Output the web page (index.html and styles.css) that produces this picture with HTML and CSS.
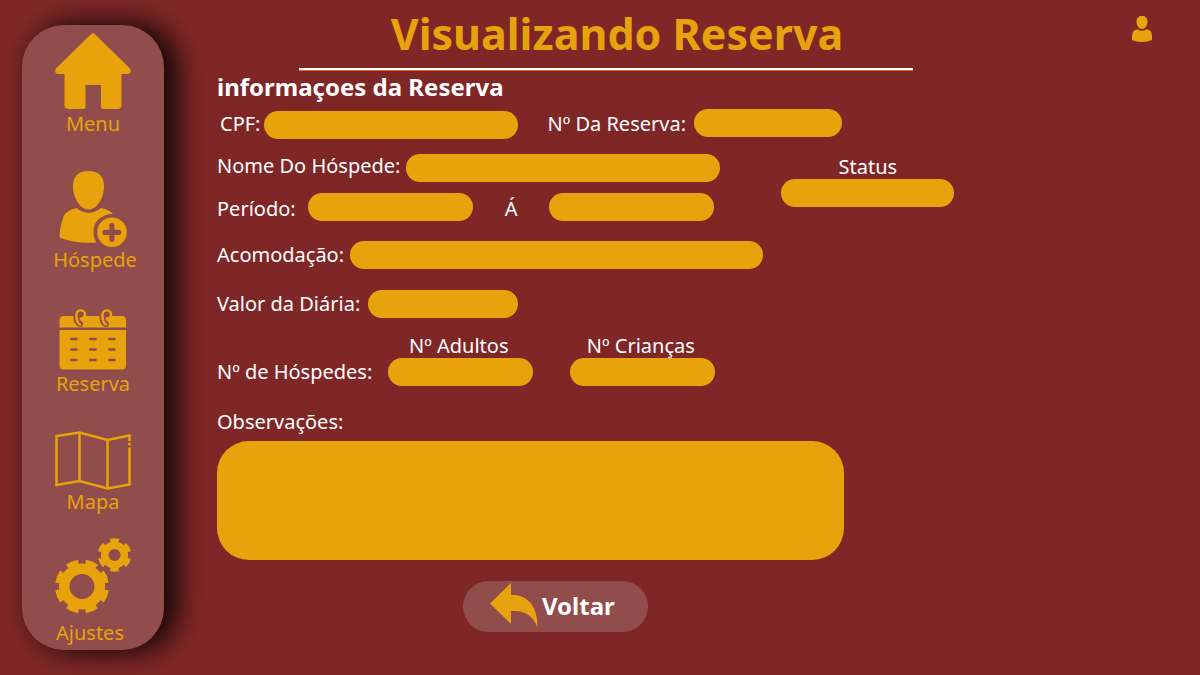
FILE: index.html
```html
<!DOCTYPE html>
<html lang="pt-BR">
<head>
<meta charset="utf-8">
<meta name="viewport" content="width=device-width, initial-scale=1">
<title>Visualizando Reserva</title>
<link rel="stylesheet" href="styles.css">
</head>
<body>
<div class="app">
  <nav class="sidebar" aria-label="Principal">
    <a class="nav-item" href="#menu">
      <svg class="icon" width="76" height="79" viewBox="0 0 76 79" aria-hidden="true">
        <path d="M36 1.200Q38 -.8 40 1.200L75 35.500Q77 41 72.500 41H66.500V72Q66.500 76 62.500 76H48Q46 76 46 74V52H30.500V74Q30.500 76 28.500 76H14Q9.500 76 9.500 72V41H3.500Q-1 41 .8 35.500Z"/>
      </svg>
      <span>Menu</span>
    </a>
    <a class="nav-item nav-guest" href="#hospede">
      <svg class="icon" width="68" height="77" viewBox="0 0 68 77" aria-hidden="true">
        <path d="M29.500 0C39 0 45 5 45 15C45 27 38 38.500 29.500 38.500S14 27 14 15C14 5 20 0 29.500 0Z"/>
        <path d="M17.500 37Q29.500 46.500 42 37Q50 38.500 54 42.800C42 43.500 34 51 34.500 61Q34.500 67 37.500 71.500Q17 73 1.500 67Q.5 66.500 .5 64Q1 55 4.500 45.500Q7 39.500 17.500 37Z"/>
        <path fill-rule="evenodd" d="M53 46.500a14.800 14.800 0 1 1 0 29.600a14.800 14.800 0 1 1 0-29.600ZM50.300 54.500V58.800H46a2.500 2.500 0 0 0 0 5.200H50.300V68.300a2.600 2.600 0 0 0 5.200 0V64H59.800a2.500 2.500 0 0 0 0-5.200H55.500V54.500a2.600 2.600 0 0 0-5.200 0Z"/>
      </svg>
      <span>Hóspede</span>
    </a>
    <a class="nav-item" href="#reserva">
      <svg class="icon" width="68" height="63" viewBox="0 0 68 63" aria-hidden="true">
        <path d="M5 7H63Q67 7 67 11V18.500H.5V11Q.5 7 5 7Z"/>
        <path d="M.5 21H67V56Q67 60.500 62.500 60.500H5Q.5 60.500 .5 56Z"/>
        <g class="cut" stroke-width="6"><path d="M17.500 6V9Q17.500 13.500 21 15M43.500 6V9Q43.500 13.500 47 15"/></g>
        <g class="cut" stroke-width="2.500"><path d="M12.300 30H17.500M31.300 30H36.500M50.300 30H55.500M12.300 40.500H17.500M31.300 40.500H36.500M50.300 40.500H55.500M12.300 51H17.500M31.300 51H36.500M50.300 51H55.500"/></g>
        <g class="line" stroke-width="2.500" stroke-linecap="round"><path d="M21 15.500C17 13.500 17.500 9 17.500 5.500C17.500 0 26 0 26 5.500C26 7 26 8 24.500 8M47 15.500C43 13.500 43.500 9 43.500 5.500C43.500 0 52 0 52 5.500C52 7 52 8 50.500 8"/></g>
        <g class="hole"><ellipse cx="21.700" cy="5.500" rx="2.500" ry="3"/><ellipse cx="47.700" cy="5.500" rx="2.500" ry="3"/></g>
      </svg>
      <span>Reserva</span>
    </a>
    <a class="nav-item nav-map" href="#mapa">
      <svg class="icon" width="76" height="59" viewBox="0 0 76 59" aria-hidden="true">
        <g class="line" stroke-width="2.500"><path d="M74.500 10V4.500L52.500 9L24.500 1.500L1.500 5V54L24.500 50L52.500 57.500L74.500 53.500V16.500M24.500 1.500V50M52.500 9V57.500M74.500 11.500V14.500"/></g>
      </svg>
      <span>Mapa</span>
    </a>
    <a class="nav-item nav-settings" href="#ajustes">
      <svg class="icon" width="76" height="83" viewBox="0 0 76 83" aria-hidden="true">
        <g class="line">
          <circle cx="27" cy="48.500" r="17.800" stroke-width="10.600"/>
          <circle cx="27" cy="48.500" r="24.500" stroke-width="5" pathLength="80" stroke-dasharray="6.200 3.800" stroke-dashoffset="-1.900"/>
          <circle cx="59.500" cy="17" r="9.800" stroke-width="7.600"/>
          <circle cx="59.500" cy="17" r="14.800" stroke-width="4" pathLength="60" stroke-dasharray="5.600 4.400" stroke-dashoffset="-2.200"/>
        </g>
      </svg>
      <span>Ajustes</span>
    </a>
  </nav>

  <main class="content">
    <header class="header">
      <h1 class="title">Visualizando Reserva</h1>
      <button class="user" type="button" aria-label="Usuário">
        <svg class="icon" width="20" height="26" viewBox="0 0 20 26" aria-hidden="true">
          <path d="M10 0C13.500 0 15.500 2 15.500 5.500C15.500 9.500 13 13 10 13S4.500 9.500 4.500 5.500C4.500 2 6.500 0 10 0Z"/>
          <path d="M5.500 13.300Q10 16.300 14.500 13.300Q20 14 20 20V24Q16 26 10 26T0 24V20Q0 14 5.500 13.300Z"/>
        </svg>
      </button>
    </header>

    <form class="form">
      <h2 class="subtitle">informaçoes da Reserva</h2>

      <div class="row row-ids">
        <label for="cpf">CPF:</label>
        <input class="field field-cpf" id="cpf" type="text">
        <label class="label-number" for="numero">Nº Da Reserva:</label>
        <input class="field field-number" id="numero" type="text">
      </div>

      <div class="stay">
        <div class="stay-rows">
          <div class="row row-top">
            <label for="nome">Nome Do Hóspede:</label>
            <input class="field field-name" id="nome" type="text">
          </div>
          <div class="row row-period">
            <label for="inicio">Período:</label>
            <input class="field field-date" id="inicio" type="text">
            <label class="label-to" for="fim">Á</label>
            <input class="field field-date" id="fim" type="text">
          </div>
        </div>
        <div class="stack stack-status">
          <label for="status">Status</label>
          <input class="field" id="status" type="text">
        </div>
      </div>

      <div class="row row-room">
        <label for="acomodacao">Acomodação:</label>
        <input class="field field-room" id="acomodacao" type="text">
      </div>

      <div class="row row-rate">
        <label for="diaria">Valor da Diária:</label>
        <input class="field field-rate" id="diaria" type="text">
      </div>

      <div class="row row-guests" role="group" aria-labelledby="hospedes">
        <span class="group-label" id="hospedes">Nº de Hóspedes:</span>
        <div class="stack">
          <label for="adultos">Nº Adultos</label>
          <input class="field" id="adultos" type="text">
        </div>
        <div class="stack">
          <label for="criancas">Nº Crianças</label>
          <input class="field" id="criancas" type="text">
        </div>
      </div>

      <div class="notes">
        <label for="obs">Observações:</label>
        <textarea class="field field-notes" id="obs"></textarea>
      </div>

      <div class="actions">
        <button class="back" type="button">
          <svg class="icon" width="48" height="45" viewBox="0 0 48 45" aria-hidden="true">
            <path d="M0 20.500L21 0V12C36 11 48 22 47.500 44.500C43 32 34 27 21 28V41Z"/>
          </svg>
          Voltar
        </button>
      </div>
    </form>
  </main>
</div>
</body>
</html>
```
FILE: styles.css
```css
:root {
  --bg: #7f2727;
  --panel: #914d4b;
  --gold: #e7a20c;
}

* {
  box-sizing: border-box;
}

body {
  margin: 0;
  background: var(--bg);
  color: #fff;
  font: 20px/24px "Noto Sans", "Open Sans", sans-serif;
}

.app {
  display: flex;
  align-items: flex-start;
  gap: 53px;
  padding: 0 48px 0 22px;
}

.icon {
  display: block;
  flex: none;
  fill: var(--gold);
}

.line {
  fill: none;
  stroke: var(--gold);
}

.cut {
  fill: none;
  stroke: var(--panel);
  stroke-linecap: round;
}

.hole {
  fill: var(--panel);
}

/* Sidebar */
.sidebar {
  display: flex;
  flex: none;
  flex-direction: column;
  gap: 35px;
  width: 142px;
  margin: 25px 0;
  padding: 8px 0 5px;
  border-radius: 42px;
  background: var(--panel);
  box-shadow: 12px 0 28px 2px rgba(0, 0, 0, 0.85);
}

.nav-item {
  display: flex;
  flex-direction: column;
  align-items: center;
  color: var(--gold);
  text-decoration: none;
}

.nav-guest {
  padding-bottom: 2px;
}

.nav-guest span {
  margin-left: 4px;
}

.nav-map {
  margin-bottom: -11px;
}

.nav-settings span {
  margin-right: 6px;
}

/* Header */
.content {
  flex: 1;
  min-width: 0;
}

.header {
  display: flex;
  align-items: flex-start;
  justify-content: space-between;
  padding-left: 82px;
}

.title {
  width: 614px;
  margin: 0;
  padding: 3px 0 5px 22px;
  border-bottom: 1px solid #d4691e;
  box-shadow: inset 0 -2px #fff;
  color: var(--gold);
  font-size: 43px;
  line-height: 62px;
  text-align: center;
}

.user {
  margin-top: 16px;
  padding: 0;
  border: 0;
  background: none;
}

/* Form */
.subtitle {
  margin: 0;
  font-size: 24px;
  line-height: 32px;
}

.row {
  display: flex;
  align-items: center;
  gap: 6px;
}

.field {
  height: 28px;
  padding: 0 12px;
  border: 0;
  border-radius: 14px;
  background: var(--gold);
  color: #fff;
  font: inherit;
}

.row-ids {
  gap: 4px;
  height: 30px;
  margin-top: 6px;
  padding-left: 3px;
}

.field-cpf {
  align-self: flex-end;
  width: 254px;
}

.label-number {
  margin: 0 4px 0 25px;
}

.field-number {
  align-self: flex-start;
  width: 148px;
}

.stay {
  display: flex;
  gap: 61px;
  margin-top: 15px;
}

.row-top {
  align-items: flex-start;
}

.field-name {
  width: 314px;
}

.row-period {
  align-items: flex-end;
  gap: 12px;
  margin-top: 11px;
}

.field-date {
  width: 165px;
}

.label-to {
  margin: 0 20px;
}

.stack {
  display: flex;
  flex-direction: column;
  width: 145px;
  text-align: center;
}

.stack .field {
  width: 100%;
}

.stack-status {
  width: 173px;
  margin-top: 1px;
}

.row-room {
  margin-top: 20px;
}

.field-room {
  width: 413px;
}

.row-rate {
  gap: 8px;
  margin-top: 21px;
}

.field-rate {
  width: 150px;
}

.row-guests {
  align-items: flex-end;
  gap: 37px;
  margin-top: 16px;
}

.row-guests .stack label {
  padding-right: 4px;
}

.group-label {
  margin: 0 -21px 2px 0;
}

.notes {
  display: flex;
  flex-direction: column;
  gap: 7px;
  width: 627px;
  margin-top: 24px;
}

.field-notes {
  height: 119px;
  padding: 16px 24px;
  border-radius: 32px;
  resize: none;
}

.actions {
  display: flex;
  padding: 21px 0 20px 246px;
}

.back {
  display: flex;
  align-items: center;
  gap: 4px;
  height: 51px;
  padding: 0 33px 2px 27px;
  border: 0;
  border-radius: 26px;
  background: var(--panel);
  color: #fff;
  font: bold 24px/32px "Noto Sans", "Open Sans", sans-serif;
}
```
